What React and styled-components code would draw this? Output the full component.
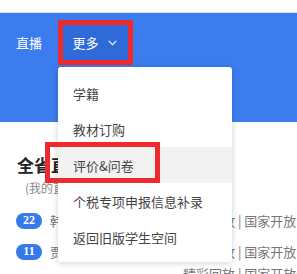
import React from "react";
import styled, { createGlobalStyle } from "styled-components";

const Global = createGlobalStyle`
  html, body { margin: 0; padding: 0; background: #fff; }
  body { font-family: "Noto Sans CJK SC", "Noto Sans", Arial, sans-serif; }
`;

const Page = styled.div`
  position: relative;
  width: 297px;
  height: 274px;
  overflow: hidden;
  background: #fff;
`;

const TopStrip = styled.div`
  height: 12px;
  border-bottom: 1px solid #d6e4fb;
  background: #fff;
`;

const Header = styled.div`
  height: 109px;
  background: #3b7def;
  padding-top: 7px;
  box-sizing: border-box;
`;

const Nav = styled.div`
  display: flex;
  align-items: center;
  padding-left: 16px;
`;

const NavItem = styled.div`
  display: flex;
  align-items: center;
  justify-content: ${(p) => (p.$active ? "center" : "flex-start")};
  gap: 9px;
  height: 45px;
  box-sizing: border-box;
  width: ${(p) => (p.$active ? "75px" : "42px")};
  color: #fff;
  font-size: 13px;
  background: ${(p) => (p.$active ? "#2f6ad9" : "transparent")};
  border: ${(p) => (p.$active ? "5px solid #ee2a2e" : "none")};
  padding-right: ${(p) => (p.$active ? "2px" : "0")};
`;

const Content = styled.div`
  padding: 31px 0 0 0;
`;

const Title = styled.div`
  padding-left: 17px;
  font-size: 17px;
  font-weight: 700;
  color: #222;
  line-height: 24px;
`;

const Sub = styled.div`
  padding-left: 25px;
  font-size: 12px;
  color: #888;
  line-height: 20px;
  margin-top: 1px;
`;

const Rows = styled.div`
  margin-top: 7px;
  display: flex;
  flex-direction: column;
`;

const Row = styled.div`
  display: grid;
  grid-template-columns: 26px 125px 1fr;
  column-gap: 8px;
  align-items: center;
  padding-left: 16px;
  height: 31px;
  margin-top: ${(p) => (p.$lift ? "-9px" : "0")};
`;

const Badge = styled.span`
  display: flex;
  align-items: center;
  justify-content: center;
  width: 26px;
  height: 16px;
  border-radius: 8px;
  background: #3579ea;
  color: #fff;
  font-family: "Liberation Serif", serif;
  font-weight: 700;
  font-size: 12px;
`;

const RowText = styled.span`
  font-size: 13px;
  color: #777;
  white-space: nowrap;
  overflow: hidden;
`;

const Menu = styled.div`
  position: absolute;
  left: 58px;
  top: 67px;
  width: 174px;
  padding: 8px 0 7px;
  background: #fff;
  border-radius: 3px;
  box-shadow: 0 1px 6px rgba(0, 0, 0, 0.18);
`;

const MenuItem = styled.div`
  height: 36px;
  display: flex;
  align-items: center;
  padding-left: 15px;
  font-size: 13px;
  color: #444;
  background: ${(p) => (p.$hover ? "#f2f2f2" : "transparent")};
`;

const Mark = styled.div`
  position: absolute;
  left: 45px;
  top: 142px;
  width: 115px;
  height: 41px;
  box-sizing: border-box;
  border: 5px solid #ee2a2e;
  pointer-events: none;
`;

const Chevron = () => (
  <svg width="9" height="6" viewBox="0 0 9 6" fill="none">
    <path d="M0.7 0.8 L4.5 4.6 L8.3 0.8" stroke="#fff" strokeWidth="1.1" />
  </svg>
);

export default function App() {
  const items = ["学籍", "教材订购", "评价&问卷", "个税专项申报信息补录", "返回旧版学生空间"];
  return (
    <>
      <Global />
      <Page>
        <TopStrip />
        <Header>
          <Nav>
            <NavItem>直播</NavItem>
            <NavItem $active>
              更多 <Chevron />
            </NavItem>
          </Nav>
        </Header>
        <Content>
          <Title>全省直播课程</Title>
          <Sub>(我的直播课程)</Sub>
          <Rows>
            <Row>
              <Badge>22</Badge>
              <RowText>韩老师直播课堂</RowText>
              <RowText>精彩回放 | 国家开放大学</RowText>
            </Row>
            <Row>
              <Badge>11</Badge>
              <RowText>贾老师直播课堂</RowText>
              <RowText>精彩回放 | 国家开放大学</RowText>
            </Row>
            <Row $lift>
              <span />
              <span />
              <RowText>精彩回放 | 国家开放大学</RowText>
            </Row>
          </Rows>
        </Content>
        <Menu>
          {items.map((t, i) => (
            <MenuItem key={t} $hover={i === 2}>
              {t}
            </MenuItem>
          ))}
        </Menu>
        <Mark />
      </Page>
    </>
  );
}
